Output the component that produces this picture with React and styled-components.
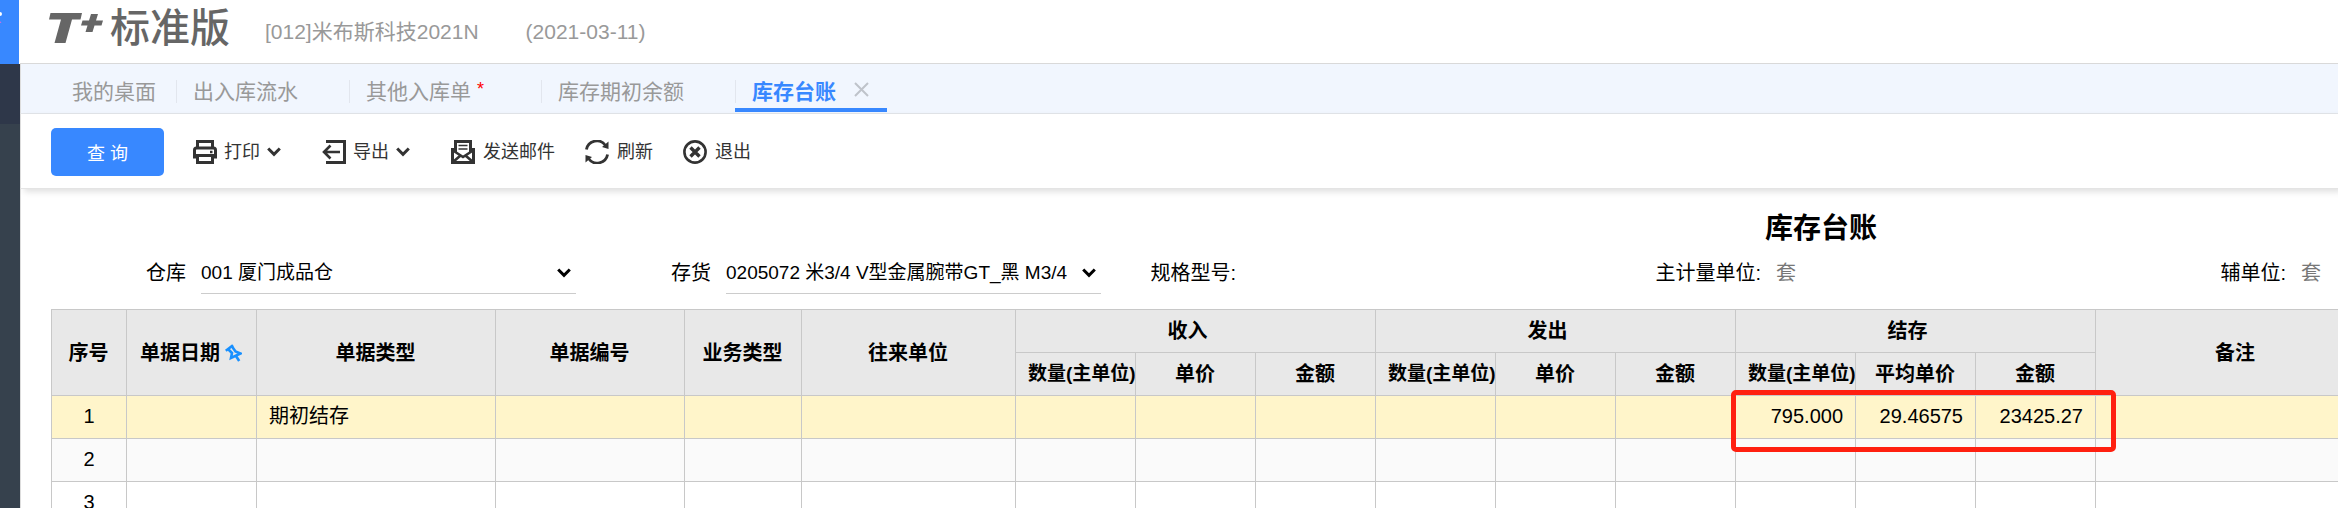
import React from "react";
import styled, { createGlobalStyle, css } from "styled-components";

const GlobalStyle = createGlobalStyle`
  * { box-sizing: border-box; }
  body {
    margin: 0;
    background: #fff;
    font-family: "Liberation Sans", "Noto Sans CJK SC", sans-serif;
    color: #000;
  }
  button, select { font: inherit; color: inherit; }
`;

const Shell = styled.div`
  display: flex;
  height: 100vh;
  overflow: hidden;
`;

const Sidebar = styled.aside`
  flex: 0 0 20px;
  display: flex;
  flex-direction: column;
`;

const SideBrand = styled.div`
  width: 19px;
  height: 64px;
  background: #3888ff;
  svg { display: block; }
`;

const SideActive = styled.div`
  height: 60px;
  background: #2e3749;
`;

const SideRest = styled.div`
  flex: 1;
  background: #36414d;
`;

const Main = styled.main`
  flex: 1;
  min-width: 0;
  overflow: hidden;
`;

const Header = styled.header`
  display: flex;
  align-items: center;
  height: 64px;
  padding-left: 29px;
  border-bottom: 1px solid #d9d9d9;
  color: #999;
  font-size: 21px;
  white-space: nowrap;
`;

const Logo = styled.div`
  display: flex;
  align-items: center;
  align-self: flex-start;
  width: 216px;
  height: 56px;
  color: #666;
`;

const LogoMark = styled.svg`
  width: 54px;
  height: 30px;
  margin-right: 7px;
`;

const Edition = styled.span`
  font-size: 40px;
  line-height: 56px;
  font-weight: 500;
`;

const Account = styled.span`
  line-height: 24px;
  margin-right: 47px;
`;

const Tabs = styled.nav`
  display: flex;
  height: 50px;
  padding-left: 34px;
  border-left: 1px solid #ddd;
  border-bottom: 1px solid #e3e6ea;
  background: #f1f6fe;
  font-size: 21px;
`;

const Tab = styled.div`
  position: relative;
  display: flex;
  align-items: center;
  padding: 2px ${(p) => (p.$first ? 20 : 18)}px 0 17px;
  white-space: nowrap;
  ${(p) =>
    !p.$first &&
    css`
      &::before {
        content: "";
        position: absolute;
        left: 0;
        top: 16px;
        height: 23px;
        border-left: 1px solid #e2e6ee;
      }
    `}
  ${(p) =>
    p.$active &&
    css`
      &::after {
        content: "";
        position: absolute;
        left: 0;
        right: 0;
        bottom: 1px;
        height: 4px;
        background: #3888ff;
      }
    `}
`;

const TabLink = styled.a`
  color: ${(p) => (p.$active ? "#3888ff" : "#999")};
  font-weight: ${(p) => (p.$active ? 700 : 400)};
  text-decoration: none;
`;

const Dirty = styled.span`
  width: 19px;
  padding-left: 6px;
  color: #f00;
  font-size: 18px;
`;

const CloseSlot = styled.span`
  width: 33px;
`;

const CloseButton = styled.button`
  display: flex;
  align-items: center;
  width: 33px;
  height: 24px;
  padding: 0 0 0 18px;
  border: 0;
  background: none;
`;

const Toolbar = styled.div`
  position: relative;
  display: flex;
  align-items: center;
  height: 75px;
  padding: 2px 0 0 30px;
  border-left: 1px solid #ddd;
  border-bottom: 1px solid #e4e4e4;
  background: #fff;
  box-shadow: 4px 3px 6px rgba(0, 0, 0, 0.12);
  font-size: 18px;
`;

const PrimaryButton = styled.button`
  width: 113px;
  height: 48px;
  padding: 0;
  margin-right: 29px;
  border: 0;
  border-radius: 5px;
  background: #3888ff;
  color: #fff;
`;

const ToolButton = styled.button`
  display: flex;
  align-items: center;
  gap: ${(p) => (p.$menu ? 7 : 8)}px;
  padding: 0;
  border: 0;
  background: none;
  color: #333;
  line-height: 24px;
  white-space: nowrap;
  margin-right: ${(p) => (p.$menu ? 41 : 30)}px;
`;

const ReportArea = styled.section`
  min-height: 319px;
  padding-left: 30px;
  border-left: 1px solid #ddd;
  overflow: hidden;
`;

const Report = styled.div`
  width: 3540px;
`;

const Title = styled.h1`
  margin: 0;
  padding-top: 20px;
  font-size: 28px;
  line-height: 40px;
  font-weight: 700;
  text-align: center;
`;

const Filters = styled.div`
  display: grid;
  grid-template-columns: repeat(5, 525px);
  height: 45px;
  margin-bottom: 15px;
  font-size: 20px;
`;

const Field = styled.div`
  display: flex;
  align-items: flex-start;
  line-height: 48px;
  white-space: nowrap;
`;

const FieldLabel = styled.label`
  width: 135px;
  margin-right: 15px;
  text-align: right;
`;

const FieldValue = styled.output`
  color: #777;
`;

const SelectBox = styled.div`
  position: relative;
  width: 375px;
  height: 45px;
  border-bottom: 1px solid #ccc;
  svg {
    position: absolute;
    right: 5px;
    top: 19px;
    pointer-events: none;
  }
`;

const Select = styled.select`
  appearance: none;
  display: block;
  width: 350px;
  height: 44px;
  padding: 0;
  border: 0;
  background: none;
  font-size: 19px;
`;

const Table = styled.table`
  width: 2324px;
  table-layout: fixed;
  border-collapse: separate;
  border-spacing: 0;
  border-top: 1px solid #c8c8c8;
  border-left: 1px solid #c8c8c8;
  font-size: 20px;
`;

const HeadCell = styled.th`
  height: 43px;
  padding: 0 ${(p) => (p.$group ? 28 : 13)}px 0 12px;
  border-right: 1px solid #c8c8c8;
  border-bottom: 1px solid #c8c8c8;
  background: #e8e8e8;
  font-weight: 700;
  line-height: 24px;
  overflow: hidden;
  white-space: nowrap;
`;

const UnitHeadCell = styled(HeadCell)`
  padding-right: 0;
  font-size: 19px;
  text-align: left;
`;

const Pinned = styled.span`
  display: flex;
  align-items: center;
  justify-content: center;
  gap: 5px;
`;

const Row = styled.tr`
  background: ${(p) => p.$bg};
`;

const Cell = styled.td`
  position: relative;
  height: 43px;
  padding: 0 12px 2px;
  border-right: 1px solid #c8c8c8;
  border-bottom: 1px solid #c8c8c8;
  line-height: 24px;
  text-align: ${(p) => p.$align || "left"};
  white-space: nowrap;
`;

const Highlight = styled.span`
  position: absolute;
  z-index: 1;
  left: -5px;
  top: -6px;
  width: 385px;
  height: 62px;
  border: 5px solid #ff2010;
  border-radius: 5px;
`;

const Chevron = ({ color = "#333" }) => (
  <svg width="14" height="10" viewBox="0 0 14 10" fill="none" stroke={color} strokeWidth="3" aria-hidden="true">
    <path d="M1.2 1.5 7 7.3l5.8-5.8" />
  </svg>
);

const PrintIcon = () => (
  <svg width="24" height="24" viewBox="0 0 24 24" fill="none" stroke="#333" strokeWidth="3" aria-hidden="true">
    <path d="M4.5 8V1.5h15V8" />
    <path d="M5 17H1.5V10Q1.5 8 3.5 8h17q2 0 2 2v7H19" />
    <path d="M4.5 15.5h15v7h-15z" />
    <path d="M17 12h2.5" strokeWidth="2.5" />
  </svg>
);

const ExportIcon = () => (
  <svg width="24" height="24" viewBox="0 0 24 24" fill="none" stroke="#333" strokeWidth="3" aria-hidden="true">
    <path d="M4 1.5h18.5v21H4" />
    <path d="M2 12h16M8.5 5.5 2 12l6.5 6.5" strokeWidth="2.6" />
  </svg>
);

const MailIcon = () => (
  <svg width="24" height="24" viewBox="0 0 24 24" fill="none" stroke="#333" aria-hidden="true">
    <path d="M4.5 12V1.5h15V12" strokeWidth="3" />
    <path d="M7.5 5.5h9M7.5 9h9" strokeWidth="1.4" />
    <path d="M1.5 8v14.5h21V8" strokeWidth="3" />
    <path d="M2 10.5 12 17l10-6.5M2 22l7.5-6.5M22 22l-7.5-6.5" strokeWidth="2.6" />
  </svg>
);

const RefreshIcon = () => (
  <svg width="24" height="24" viewBox="0 0 24 24" fill="none" stroke="#333" strokeWidth="2.8" aria-hidden="true">
    <path d="M1.4 9.5A10.6 10.6 0 0 1 20.5 5.5" />
    <path d="M22.6 14.5A10.6 10.6 0 0 1 3.5 18.5" />
    <path d="M23.5 1.5V9L17 7zM.5 22.5V15L7 17z" fill="#333" stroke="none" />
  </svg>
);

const ExitIcon = () => (
  <svg width="24" height="24" viewBox="0 0 24 24" fill="none" stroke="#333" aria-hidden="true">
    <circle cx="12" cy="12" r="10.6" strokeWidth="2.6" />
    <path d="m7.5 7.5 9 9M16.5 7.5l-9 9" strokeWidth="3.4" />
  </svg>
);

const PinIcon = () => (
  <svg width="17" height="18" viewBox="0 0 17 18" fill="none" stroke="#1890ff" strokeWidth="2.6" aria-hidden="true">
    <path d="M.8 6.8 8 1.2" />
    <path d="M3.5 5.5 7 9 6 14 15.5 9.5 10.5 7.5 7 2.5" />
    <path d="M11 12l3.2 5" />
  </svg>
);

const tabs = [
  { label: "我的桌面", first: true },
  { label: "出入库流水" },
  { label: "其他入库单", dirty: true },
  { label: "库存期初余额" },
  { label: "库存台账", active: true },
];

const columns = [75, 130, 239, 189, 117, 214, 120, 120, 120, 120, 120, 120, 120, 120, 120, 280];

const rows = [
  { no: 1, type: "期初结存", qty: "795.000", price: "29.46575", amount: "23425.27", bg: "#fff5ca" },
  { no: 2, bg: "#fafafa" },
  { no: 3, bg: "#fff" },
];

const blanks = (n, key) => Array.from({ length: n }, (_, i) => <Cell key={key + i} />);

export default function App() {
  return (
    <>
      <GlobalStyle />
      <Shell>
        <Sidebar>
          <SideBrand>
            <svg width="19" height="30" viewBox="0 0 19 30" aria-hidden="true">
              <circle cx="0" cy="14" r="2" fill="#fff" />
              <path d="M0 21 1.5 23H0z" fill="#c86fe0" />
            </svg>
          </SideBrand>
          <SideActive />
          <SideRest />
        </Sidebar>
        <Main>
          <Header>
            <Logo>
              <LogoMark viewBox="0 0 54 30" fill="#666" role="img" aria-label="T+">
                <path d="M1.5 0H33l-1.5 6.5H23L16.5 30H5.5L12 6.5H0z" />
                <path d="M42 1h7l-2 6.5h7L52.5 12.5h-7L43.5 19h-7l2-6.5H32L33.5 7.5H40z" />
              </LogoMark>
              <Edition>标准版</Edition>
            </Logo>
            <Account>[012]米布斯科技2021N</Account>
            <span>(2021-03-11)</span>
          </Header>
          <Tabs>
            {tabs.map((t) => (
              <Tab key={t.label} $first={t.first} $active={t.active}>
                <TabLink href="#" $active={t.active}>{t.label}</TabLink>
                {t.dirty && <Dirty>*</Dirty>}
                {t.active && (
                  <CloseButton aria-label="关闭">
                    <svg width="15" height="15" viewBox="0 0 15 15" stroke="#bfc3ca" strokeWidth="2" aria-hidden="true">
                      <path d="M1 1l13 13M14 1 1 14" />
                    </svg>
                  </CloseButton>
                )}
                {!t.active && !t.first && <CloseSlot />}
              </Tab>
            ))}
          </Tabs>
          <Toolbar>
            <PrimaryButton>查 询</PrimaryButton>
            <ToolButton $menu><PrintIcon /><span>打印</span><Chevron /></ToolButton>
            <ToolButton $menu><ExportIcon /><span>导出</span><Chevron /></ToolButton>
            <ToolButton><MailIcon /><span>发送邮件</span></ToolButton>
            <ToolButton><RefreshIcon /><span>刷新</span></ToolButton>
            <ToolButton><ExitIcon /><span>退出</span></ToolButton>
          </Toolbar>
          <ReportArea>
            <Report>
              <Title>库存台账</Title>
              <Filters>
                <Field>
                  <FieldLabel htmlFor="warehouse">仓库</FieldLabel>
                  <SelectBox>
                    <Select id="warehouse"><option>001 厦门成品仓</option></Select>
                    <Chevron color="#000" />
                  </SelectBox>
                </Field>
                <Field>
                  <FieldLabel htmlFor="stock">存货</FieldLabel>
                  <SelectBox>
                    <Select id="stock"><option>0205072 米3/4 V型金属腕带GT_黑 M3/4</option></Select>
                    <Chevron color="#000" />
                  </SelectBox>
                </Field>
                <Field>
                  <FieldLabel htmlFor="spec">规格型号:</FieldLabel>
                  <FieldValue id="spec" />
                </Field>
                <Field>
                  <FieldLabel htmlFor="unit">主计量单位:</FieldLabel>
                  <FieldValue id="unit">套</FieldValue>
                </Field>
                <Field>
                  <FieldLabel htmlFor="subunit">辅单位:</FieldLabel>
                  <FieldValue id="subunit">套</FieldValue>
                </Field>
              </Filters>
              <Table>
                <colgroup>
                  {columns.map((w, i) => <col key={i} width={w} />)}
                </colgroup>
                <thead>
                  <tr>
                    <HeadCell rowSpan={2}>序号</HeadCell>
                    <HeadCell rowSpan={2}><Pinned>单据日期<PinIcon /></Pinned></HeadCell>
                    <HeadCell rowSpan={2}>单据类型</HeadCell>
                    <HeadCell rowSpan={2}>单据编号</HeadCell>
                    <HeadCell rowSpan={2}>业务类型</HeadCell>
                    <HeadCell rowSpan={2}>往来单位</HeadCell>
                    <HeadCell $group colSpan={3}>收入</HeadCell>
                    <HeadCell $group colSpan={3}>发出</HeadCell>
                    <HeadCell $group colSpan={3}>结存</HeadCell>
                    <HeadCell rowSpan={2}>备注</HeadCell>
                  </tr>
                  <tr>
                    {["单价", "单价", "平均单价"].map((price, i) => (
                      <React.Fragment key={i}>
                        <UnitHeadCell>数量(主单位)</UnitHeadCell>
                        <HeadCell>{price}</HeadCell>
                        <HeadCell>金额</HeadCell>
                      </React.Fragment>
                    ))}
                  </tr>
                </thead>
                <tbody>
                  {rows.map((r) => (
                    <Row key={r.no} $bg={r.bg}>
                      <Cell $align="center">{r.no}</Cell>
                      <Cell />
                      <Cell>{r.type}</Cell>
                      {blanks(9, "b")}
                      <Cell $align="right">
                        {r.qty}
                        {r.qty && <Highlight />}
                      </Cell>
                      <Cell $align="right">{r.price}</Cell>
                      <Cell $align="right">{r.amount}</Cell>
                      <Cell />
                    </Row>
                  ))}
                </tbody>
              </Table>
            </Report>
          </ReportArea>
        </Main>
      </Shell>
    </>
  );
}
